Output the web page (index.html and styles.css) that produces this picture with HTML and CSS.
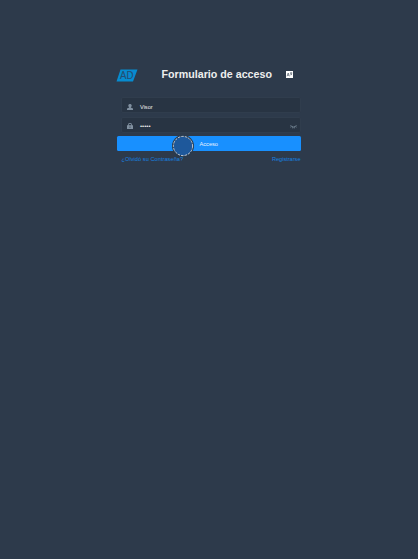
FILE: index.html
```html
<!DOCTYPE html>
<html lang="es">
<head>
<meta charset="utf-8">
<title>Formulario de acceso</title>
<link rel="stylesheet" href="styles.css">
</head>
<body>
<main class="login">
  <header class="head">
    <svg class="logo" viewBox="0 0 22 13"><path class="logo-bg" d="M4.5.5h17L17 12.5H.5z"/><text x="4" y="9.9" textLength="13.5" lengthAdjust="spacingAndGlyphs">AD</text></svg>
    <h1 class="title">Formulario de acceso</h1>
    <svg class="lang" viewBox="0 0 7 7"><path fill="#fff" d="M0 0h7v7H0z"/><path d="M1 5.3 2.2 2l1.2 3.3M1.5 4.2h1.4M4 2h2.3M5.1 1.3V2M4.3 2.5 6 4M6 2.4 4.3 4" fill="none" stroke="#2d3a4b" stroke-width=".55"/></svg>
  </header>
  <div class="field">
    <svg class="icon" viewBox="0 0 6 6"><path d="M3 0a1.6 1.6 0 0 1 1 2.9l-.2.7L6 4.6V6H0V4.6l2.2-1-.2-.7A1.6 1.6 0 0 1 3 0z"/></svg>
    <span class="value">Visor</span>
  </div>
  <div class="field">
    <svg class="icon" viewBox="0 0 6 6"><path fill-rule="evenodd" d="M1.1 2.3V1.8a1.9 1.9 0 0 1 3.8 0v.5H6V6H0V2.3zm.8 0h2.2v-.5a1.1 1.1 0 0 0-2.2 0zm.8 1.1v1.5h.6V3.4z"/></svg>
    <span class="value dots">•••••</span>
    <svg class="eye" viewBox="0 0 7 4"><path d="M.3.6Q3.5 3.4 6.7.6M1.2 1.4.7 2.5M2.7 2v1.4M4.3 2v1.4M5.8 1.4l.5 1.1"/></svg>
  </div>
  <button class="submit">Acceso</button>
  <nav class="links"><a class="forgot">¿Olvidó su Contraseña?</a><a>Registrarse</a></nav>
  <svg class="pointer" viewBox="0 0 24 24"><circle class="halo" cx="12" cy="12" r="11"/><circle class="disc" cx="12" cy="12" r="9.5"/><circle class="ring" cx="12" cy="12" r="9.6"/></svg>
</main>
</body>
</html>
```
FILE: styles.css
```css
* { box-sizing: border-box; }
body {
  margin: 0;
  min-height: 100vh;
  background: #2d3a4b;
  font-family: "Liberation Sans", Arial, sans-serif;
  font-size: 5.6px;
  color: #eee;
}
.login {
  position: relative;
  width: 184.5px;
  margin-left: 116.5px;
  padding-top: 66px;
}
.head {
  display: flex;
  align-items: center;
  height: 17px;
  margin-bottom: 14px;
}
.logo { width: 22px; height: 13px; margin: 1px 0 0 -.5px; }
.logo-bg { fill: #078bd0; }
.logo text { font-size: 10px; fill: #244e73; stroke: #244e73; stroke-width: .15px; }
.title {
  margin: 0 0 0 23.5px;
  width: 110px;
  font-size: 10.7px;
  line-height: 17px;
  white-space: nowrap;
}
.lang { width: 7px; height: 7px; margin: -1px 0 0 14.5px; }
.field {
  display: flex;
  align-items: center;
  height: 16px;
  margin: 0 0 3.5px 4px;
  padding: 3px 3px 0 5.5px;
  border: 1px solid #303d4d;
  border-radius: 2px;
  background: #283443;
  line-height: 7px;
}
.icon { width: 6px; height: 6px; margin: .5px 7px 0 0; fill: #8090a0; }
.value { margin-top: 1.5px; }
.dots { font-size: 6px; }
.eye {
  width: 7px;
  height: 4px;
  margin: 1px 0 0 auto;
  fill: none;
  stroke: #8090a0;
  stroke-width: .7;
}
.submit {
  display: block;
  width: 100%;
  height: 15px;
  margin: 0;
  padding: 1px 0 0;
  border: 0;
  border-radius: 1.5px;
  background: #1890ff;
  color: #e8f4ff;
  font: inherit;
  line-height: 15px;
}
.links {
  display: flex;
  justify-content: space-between;
  padding: 5px .5px 0 5px;
  line-height: 7px;
  color: #1683e2;
}
.forgot { letter-spacing: .06px; }
.pointer {
  position: absolute;
  left: 54px;
  top: 134px;
  width: 24px;
  height: 24px;
}
.halo { fill: #273b51; }
.disc { fill: #1e589b; }
.ring { fill: none; stroke: #e5e9ed; stroke-width: .8; stroke-dasharray: 2.6 1; }
```
